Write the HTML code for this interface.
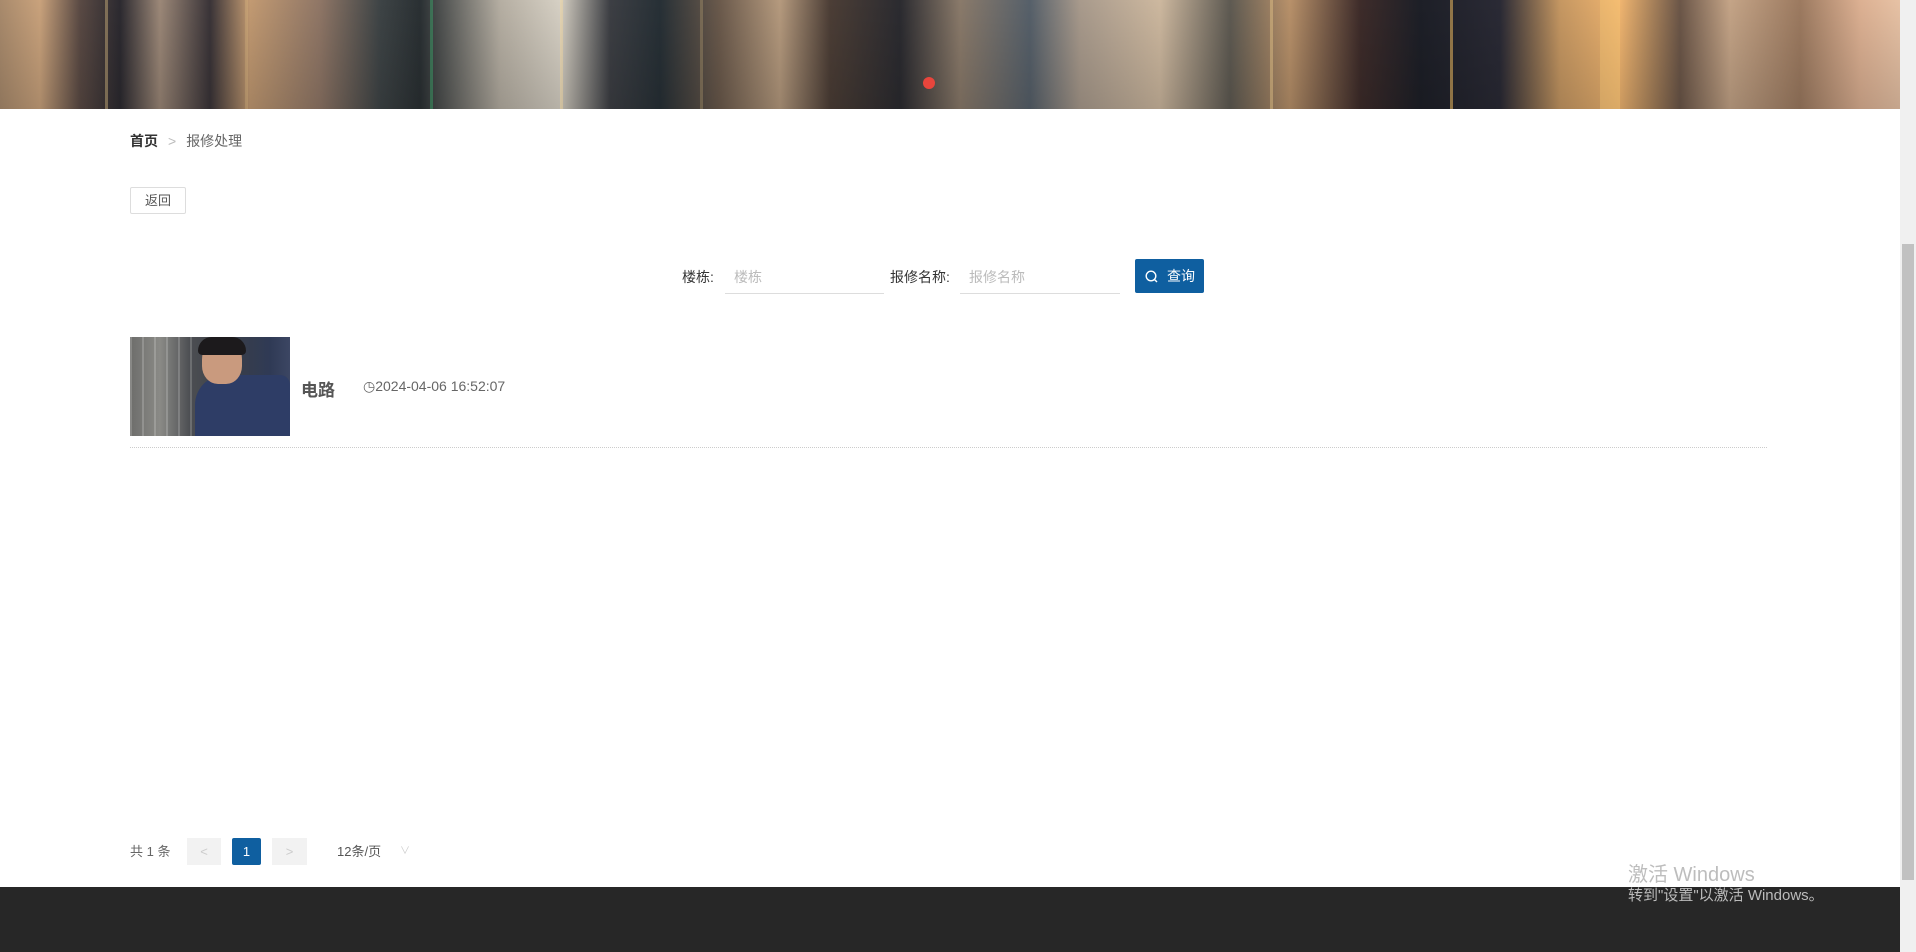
<!DOCTYPE html>
<html><head><meta charset="utf-8">
<style>
*{margin:0;padding:0;box-sizing:border-box}
body{width:1916px;height:952px;overflow:hidden;background:#fff;font-family:"Liberation Sans","Noto Sans CJK SC",sans-serif;position:relative;color:#333}
.banner{position:absolute;left:0;top:0;width:1900px;height:109px;overflow:hidden;
background:
linear-gradient(180deg,rgba(0,0,0,0) 0%,rgba(0,0,0,.15) 100%),
linear-gradient(90deg,#a88a6c 0,#c9a27c 40px,#5a4a44 80px,#2c2a30 120px,#9c8878 160px,#3a3438 210px,#c29a72 250px,#8f7666 320px,#3e4446 380px,#2a3033 420px,#b5aea2 500px,#d6d0c4 560px,#3d3f44 610px,#273036 660px,#6b5a4c 720px,#b59a7e 780px,#4c3e36 830px,#2b2b30 900px,#8a7a6a 960px,#56606a 1030px,#a89a8c 1080px,#cdb89f 1160px,#5e5a52 1230px,#b8916a 1290px,#3e2c2a 1360px,#1d1f27 1420px,#2a2a35 1500px,#c59762 1560px,#f0b570 1620px,#6b5648 1680px,#c4a487 1730px,#9c7a60 1800px,#dcb092 1860px,#e7c2a5 1900px);}
.banner i{position:absolute;top:0;bottom:0;width:3px;background:rgba(255,220,150,.35)}
.dot{position:absolute;left:923px;top:77px;width:12px;height:12px;border-radius:50%;background:#e8453c}
.sb{position:absolute;left:1900px;top:0;width:16px;height:952px;background:#f0f0f0}
.sb .th{position:absolute;left:2px;top:244px;width:12px;height:636px;background:#c1c1c1}
.crumb{position:absolute;left:130px;top:131px;font-size:14px}
.crumb b{font-weight:bold;color:#333}
.crumb span{color:#bbb;margin:0 10px}
.crumb em{font-style:normal;color:#666}
.back{position:absolute;left:130px;top:187px;width:56px;height:27px;border:1px solid #ddd;border-radius:2px;font-size:13px;color:#555;text-align:center;line-height:25px}
.lbl{position:absolute;top:267px;font-size:14px;color:#333}
.inp{position:absolute;top:259px;height:35px;border-bottom:1px solid #ddd;font-size:14px;color:#bbb;padding:8px 0 0 9px}
.btn{position:absolute;left:1135px;top:259px;width:69px;height:34px;background:#0f5fa0;border-radius:2px;color:#fff;font-size:14px;line-height:34px;padding-left:32px}
.btn svg{position:absolute;left:10px;top:11px}
.img{position:absolute;left:130px;top:337px;width:160px;height:99px;overflow:hidden;
background:linear-gradient(90deg,#6d6d6b 0,#8a8a86 30px,#4c4e52 60px,#3a3f48 100px,#2f3a55 140px,#3c4663 160px)}
.img .sh{position:absolute;left:65px;top:38px;width:95px;height:70px;background:#2e3d66;border-radius:30px 10px 0 0}
.img .hd{position:absolute;left:72px;top:2px;width:40px;height:45px;background:#c99a7e;border-radius:45% 45% 40% 40%}
.img .hr{position:absolute;left:68px;top:0;width:48px;height:18px;background:#1c1a1c;border-radius:20px 20px 6px 6px}
.img .ln{position:absolute;left:0;top:0;width:65px;height:99px;background:repeating-linear-gradient(90deg,rgba(255,255,255,.18) 0 2px,transparent 2px 12px)}
.title{position:absolute;left:301px;top:376px;font-size:17px;font-weight:bold;color:#555}
.date{position:absolute;left:363px;top:378px;font-size:14px;color:#666}
.hrl{position:absolute;left:130px;top:447px;width:1637px;border-top:1px dotted #ccc}
.pg{position:absolute;top:838px;height:27px;font-size:13px;line-height:27px;text-align:center}
.foot{position:absolute;left:0;top:887px;width:1900px;height:65px;background:#272727}
.wm1{position:absolute;left:1628px;top:858px;font-size:20px;color:#bdbdbd}
.wm2{position:absolute;left:1628px;top:884px;font-size:15px;color:#bbb}
</style></head><body>
<div class="banner">
<i style="left:105px"></i><i style="left:245px;opacity:.5"></i><i style="left:430px;background:rgba(60,200,120,.35)"></i><i style="left:560px"></i><i style="left:700px;opacity:.6"></i><i style="left:1270px"></i><i style="left:1450px;background:rgba(255,200,100,.5)"></i><i style="left:1600px;width:20px;background:rgba(255,210,120,.3)"></i>
<div class="dot"></div></div>
<div class="sb"><div class="th"></div></div>
<div class="crumb"><b>首页</b><span>&gt;</span><em>报修处理</em></div>
<div class="back">返回</div>
<div class="lbl" style="left:682px">楼栋:</div>
<div class="inp" style="left:725px;width:159px">楼栋</div>
<div class="lbl" style="left:890px">报修名称:</div>
<div class="inp" style="left:960px;width:160px">报修名称</div>
<div class="btn"><svg width="13" height="13" viewBox="0 0 13 13"><circle cx="6" cy="6" r="4.8" fill="none" stroke="#fff" stroke-width="1.4"/><path d="M9.5 9.5L12 12" stroke="#fff" stroke-width="1.4"/></svg>查询</div>
<div class="img"><div class="ln"></div><div class="sh"></div><div class="hd"></div><div class="hr"></div></div>
<div class="title">电路</div>
<div class="date">◷2024-04-06 16:52:07</div>
<div class="hrl"></div>
<div class="pg" style="left:130px;color:#666">共 1 条</div>
<div class="pg" style="left:187px;width:34px;background:#f2f2f2;color:#ccc">&lt;</div>
<div class="pg" style="left:232px;width:29px;background:#0f5fa0;color:#fff;border-radius:2px">1</div>
<div class="pg" style="left:272px;width:35px;background:#f2f2f2;color:#ccc">&gt;</div>
<div class="pg" style="left:337px;color:#555">12条/页</div>
<div class="pg" style="left:400px;color:#ccc;font-size:10px">∨</div>
<div class="foot"></div>
<div class="wm1">激活 Windows</div>
<div class="wm2">转到"设置"以激活 Windows。</div>
</body></html>
